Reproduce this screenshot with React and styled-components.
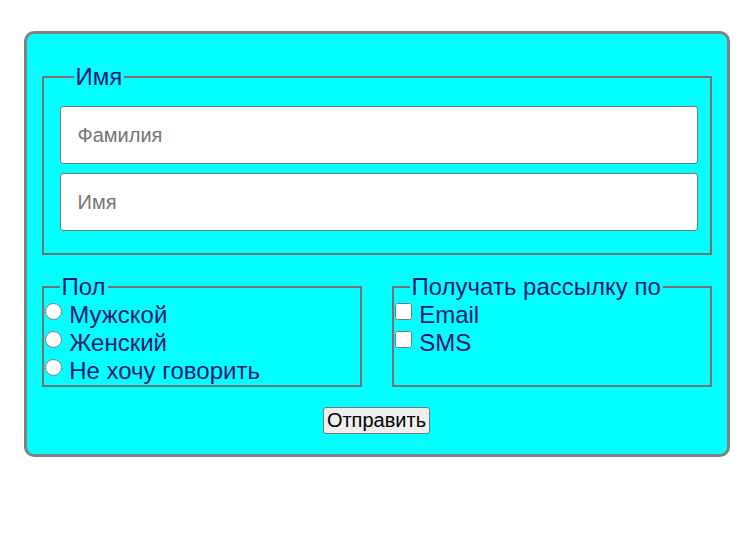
import styled, {createGlobalStyle} from 'styled-components'

const GlobalStyle = createGlobalStyle`
  body {
    margin: 0;
    font-family: "Liberation Sans", Arial, sans-serif;
    background: #ffffff;
  }
`

const Form = styled.form`
  width: 670px;
  margin: 31px auto 0;
  padding: 29px 15px 20px;
  box-sizing: content-box;
  background: #00ffff;
  border: 3px solid #808080;
  border-radius: 10px;
  color: #191970;
  font-family: "Liberation Sans", Arial, sans-serif;
`

const Fieldset = styled.fieldset`
  margin: 0;
  padding: ${props => props.$padding};
  border: 2px solid #737373;
  min-width: 0;
`

const Legend = styled.legend`
  margin-left: ${props => props.$offset}px;
  padding: 0 2px;
  font-size: 24px;
  line-height: 28px;
`

const Fields = styled.div`
  display: flex;
  flex-direction: column;
  gap: 9px;
`

const TextInput = styled.input`
  display: block;
  width: 100%;
  height: 58px;
  box-sizing: border-box;
  padding: 0 17px;
  border: 1px solid #767676;
  border-radius: 3px;
  background: #ffffff;
  font-family: "Liberation Sans", Arial, sans-serif;
  font-size: 20px;
  color: #000000;

  &::placeholder {
    color: #757575;
  }
`

const Row = styled.div`
  display: grid;
  grid-template-columns: 1fr 1fr;
  gap: 30px;
  margin-top: 18px;
`

const Option = styled.label`
  display: block;
  font-size: 24px;
  line-height: 28px;
  white-space: nowrap;

  input {
    width: 17px;
    height: 17px;
    margin: 2px 1px 0 1px;
    vertical-align: top;
  }
`

const Actions = styled.div`
  display: flex;
  justify-content: center;
  margin-top: 20px;
`

const SubmitBtn = styled.button`
  font-family: "Liberation Sans", Arial, sans-serif;
  font-size: 20px;
  line-height: 23px;
  padding: 1px 3px;
  color: #000000;
  background: #efefef;
  border: 1px solid #767676;
  border-radius: 3px;
`

const genders = ['Мужской', 'Женский', 'Не хочу говорить']
const channels = ['Email', 'SMS']

export default function App() {
  return (
    <>
      <GlobalStyle />
      <Form onSubmit={e => e.preventDefault()}>
        <Fieldset $padding="15px 12px 22px 16px">
          <Legend $offset={14}>Имя</Legend>
          <Fields>
            <TextInput type="text" placeholder="Фамилия" />
            <TextInput type="text" placeholder="Имя" />
          </Fields>
        </Fieldset>
        <Row>
          <Fieldset $padding="0 0 0 0">
            <Legend $offset={16}>Пол</Legend>
            {genders.map(g => (
              <Option key={g}>
                <input type="radio" name="gender" /> {g}
              </Option>
            ))}
          </Fieldset>
          <Fieldset $padding="0 0 0 0">
            <Legend $offset={16}>Получать рассылку по</Legend>
            {channels.map(c => (
              <Option key={c}>
                <input type="checkbox" /> {c}
              </Option>
            ))}
          </Fieldset>
        </Row>
        <Actions>
          <SubmitBtn type="submit">Отправить</SubmitBtn>
        </Actions>
      </Form>
    </>
  )
}
